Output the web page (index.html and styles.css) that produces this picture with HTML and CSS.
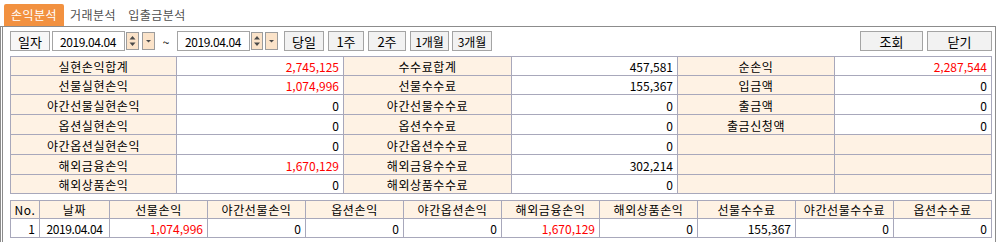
FILE: index.html
```html
<!DOCTYPE html>
<html lang="ko">
<head>
<meta charset="utf-8">
<link rel="stylesheet" href="styles.css">
</head>
<body>
<div class="tabs">
  <div class="tab active">손익분석</div>
  <div class="tab">거래분석</div>
  <div class="tab">입출금분석</div>
</div>
<div class="panel">
  <div class="toolbar">
    <div class="btn lbl">일자</div>
    <div class="date d1">2019.04.04</div>
    <div class="spin s1"><svg width="11" height="16" viewBox="0 0 11 16"><path d="M5.5 3L8.5 6.5H2.5Z M5.5 13L8.5 9.5H2.5Z" fill="#4a4a4a"/></svg></div>
    <div class="drop p1"><svg width="11" height="16" viewBox="0 0 11 16"><path d="M3 7H8L5.5 9.5Z" fill="#4a4a4a"/></svg></div>
    <div class="tilde">~</div>
    <div class="date">2019.04.04</div>
    <div class="spin s2"><svg width="10" height="16" viewBox="0 0 10 16"><path d="M5 3L8 6.5H2Z M5 13L8 9.5H2Z" fill="#4a4a4a"/></svg></div>
    <div class="drop p2"><svg width="11" height="16" viewBox="0 0 11 16"><path d="M3 7H8L5.5 9.5Z" fill="#4a4a4a"/></svg></div>
    <div class="btn b-today">당일</div>
    <div class="btn b-1w">1주</div>
    <div class="btn b-2w">2주</div>
    <div class="btn b-1m">1개월</div>
    <div class="btn b-3m">3개월</div>
    <div class="btn b-search">조회</div>
    <div class="btn b-close">닫기</div>
  </div>

  <div class="summary">
    <div class="lb">실현손익합계</div><div class="red">2,745,125</div>
    <div class="lb">수수료합계</div><div>457,581</div>
    <div class="lb">순손익</div><div class="red">2,287,544</div>

    <div class="lb">선물실현손익</div><div class="red">1,074,996</div>
    <div class="lb">선물수수료</div><div>155,367</div>
    <div class="lb">입금액</div><div>0</div>

    <div class="lb">야간선물실현손익</div><div>0</div>
    <div class="lb">야간선물수수료</div><div>0</div>
    <div class="lb">출금액</div><div>0</div>

    <div class="lb">옵션실현손익</div><div>0</div>
    <div class="lb">옵션수수료</div><div>0</div>
    <div class="lb">출금신청액</div><div>0</div>

    <div class="lb">야간옵션실현손익</div><div>0</div>
    <div class="lb">야간옵션수수료</div><div>0</div>
    <div class="lb"></div><div class="lb"></div>

    <div class="lb">해외금융손익</div><div class="red">1,670,129</div>
    <div class="lb">해외금융수수료</div><div>302,214</div>
    <div class="lb"></div><div class="lb"></div>

    <div class="lb">해외상품손익</div><div>0</div>
    <div class="lb">해외상품수수료</div><div>0</div>
    <div class="lb"></div><div class="lb"></div>
  </div>

  <div class="detail">
    <div class="hd">No.</div>
    <div class="hd">날짜</div>
    <div class="hd">선물손익</div>
    <div class="hd">야간선물손익</div>
    <div class="hd">옵션손익</div>
    <div class="hd">야간옵션손익</div>
    <div class="hd">해외금융손익</div>
    <div class="hd">해외상품손익</div>
    <div class="hd">선물수수료</div>
    <div class="hd">야간선물수수료</div>
    <div class="hd">옵션수수료</div>

    <div>1</div>
    <div class="ctr">2019.04.04</div>
    <div class="red">1,074,996</div>
    <div>0</div>
    <div>0</div>
    <div>0</div>
    <div class="red">1,670,129</div>
    <div>0</div>
    <div>155,367</div>
    <div>0</div>
    <div>0</div>
  </div>
</div>
</body>
</html>
```

FILE: styles.css
```css
* { box-sizing: border-box; }

html, body {
  margin: 0;
  background: #ffffff;
}

body {
  width: 999px;
  height: 242px;
  overflow: hidden;
  font-family: "Noto Sans CJK KR", "Noto Sans", sans-serif;
  font-size: 12px;
  line-height: 14px;
  color: #000;
}

/* ---------- tabs ---------- */
.tabs {
  display: flex;
  align-items: flex-end;
  height: 26px;
  padding-left: 4px;
}

.tab {
  height: 22px;
  line-height: 22px;
  padding: 0 6px;
  color: #505050;
  white-space: nowrap;
  letter-spacing: 0.5px;
}

.tab.active {
  width: 60px;
  padding: 0;
  text-align: center;
  background: #f29140;
  color: #ffffff;
  border-radius: 2px 2px 0 0;
}

/* ---------- panel ---------- */
.panel {
  width: 996px;
  height: 216px;
  border-top: 1px solid #8c8c8c;
  border-left: 3px double #8c8c8c;
  border-right: 1px solid #8c8c8c;
  padding: 4px 3px 0 7px;
}

/* ---------- toolbar ---------- */
.toolbar {
  display: flex;
  align-items: center;
  height: 20px;
}

.btn {
  height: 20px;
  border: 1px solid #a4a4a4;
  background: #f2f2f2;
  display: flex;
  align-items: center;
  justify-content: center;
  padding-top: 1px;
  white-space: nowrap;
  font-size: 13px;
}

.lbl { width: 40px; background: #f7f7f7; }

.date {
  height: 20px;
  width: 73px;
  border: 1px solid #a4a4a4;
  background: #fff;
  display: flex;
  align-items: center;
  padding-left: 7px;
  padding-top: 1px;
  letter-spacing: -0.4px;
}
.d1 { margin-left: 2px; }

.spin, .drop {
  height: 18px;
  background: #fbe3c9;
  border: 1px solid #9c9c9c;
  display: flex;
  align-items: center;
  justify-content: center;
}
.spin { width: 13px; }
.drop { width: 13px; }
.s1 { margin-left: 1px; }
.p1 { margin-left: 3px; }
.s2 { margin-left: 1px; width: 12px; }
.p2 { margin-left: 2px; }

.tilde {
  width: 22px;
  text-align: center;
  padding-top: 1px;
}

.b-today { width: 40px; margin-left: 6px; }
.b-1w { width: 36px; margin-left: 4px; }
.b-2w { width: 38px; margin-left: 4px; }
.b-1m { width: 39px; margin-left: 4px; font-size: 12px; }
.b-3m { width: 40px; margin-left: 3px; font-size: 12px; }
.b-search { width: 63px; margin-left: auto; }
.b-close { width: 65px; margin-left: 4px; }

/* ---------- summary grid ---------- */
.summary {
  margin-top: 5px;
  width: 982px;
  display: grid;
  grid-template-columns: 165px 166px 167px 165px 156px 156px;
  grid-template-rows: 18px 18px 19px 19px 19px 19px 18px;
  gap: 1px;
  padding: 1px;
  background: #a8a8bb;
}

.summary > div,
.detail > div {
  background: #ffffff;
  display: flex;
  align-items: center;
  justify-content: flex-end;
  padding-right: 4px;
  padding-top: 2px;
  white-space: nowrap;
  overflow: hidden;
}

.summary > .lb {
  background: #fef2e4;
  justify-content: center;
  padding-right: 0;
  letter-spacing: 0.6px;
}

.red { color: #ff0000; }

/* ---------- detail grid ---------- */
.detail {
  margin-top: 6px;
  width: 982px;
  display: grid;
  grid-template-columns: 28px 69px repeat(9, 97px);
  grid-template-rows: 17px 18px;
  gap: 1px;
  padding: 1px;
  background: #a8a8bb;
}

.detail > .hd {
  background: #fef2e4;
  justify-content: center;
  padding-right: 0;
  padding-top: 1px;
  letter-spacing: 0.6px;
}

.detail > .ctr {
  justify-content: center;
  padding-right: 0;
  letter-spacing: -0.4px;
}
```
